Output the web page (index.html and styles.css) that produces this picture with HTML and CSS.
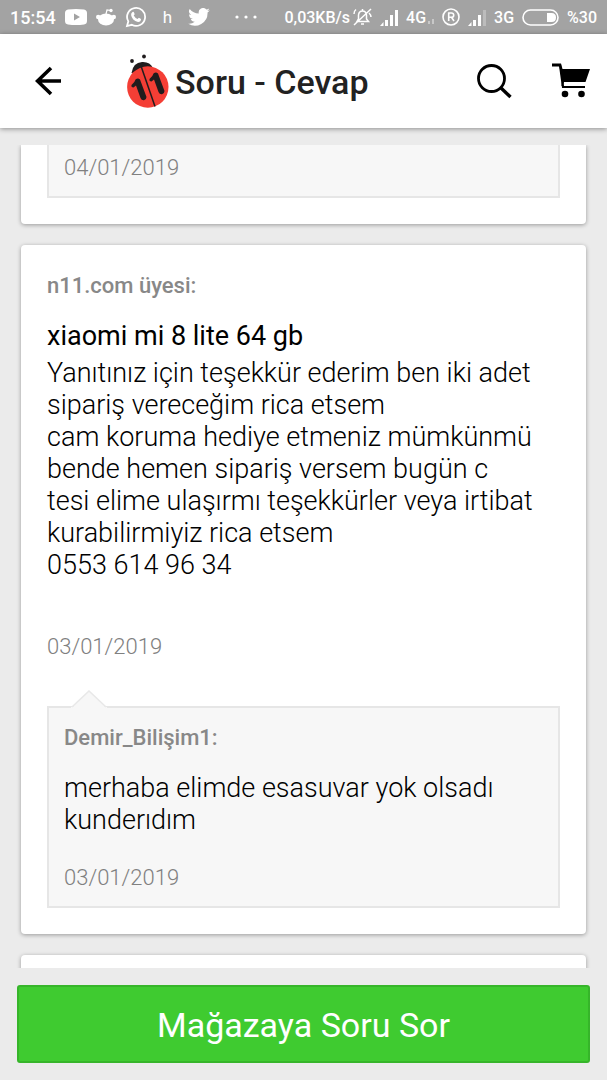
FILE: index.html
```html
<!DOCTYPE html>
<html lang="tr">
<head>
<meta charset="utf-8">
<meta name="viewport" content="width=device-width, initial-scale=1">
<title>Soru - Cevap</title>
<link rel="stylesheet" href="styles.css">
</head>
<body>
<div class="app">
  <div class="status">
    <div class="status-group">
      <span class="clock">15:54</span>
      <svg width="22" height="16" viewBox="0 0 22 16"><path fill="#fff" fill-rule="evenodd" d="M3 0.5Q11-.5 19 .5Q22 1 22 4V12Q22 15 19 15.500Q11 16.500 3 15.500Q0 15 0 12V4Q0 1 3 .5ZM9 4.500V11.500L15 8Z"/></svg>
      <svg width="20" height="18" viewBox="0 0 20 18"><g fill="#fff"><ellipse cx="10" cy="11.500" rx="8" ry="6"/><circle cx="2.200" cy="9" r="2.200"/><circle cx="17.800" cy="9" r="2.200"/><circle cx="15" cy="2.500" r="1.700"/></g><path d="M10 6L11 2L15 2.500" fill="none" stroke="#fff" stroke-width="1.200"/></svg>
      <svg width="22" height="22" viewBox="0 0 22 22"><path d="M2 20L3.300 15.400A9 9 0 1 1 6.800 18.800Z" fill="none" stroke="#fff" stroke-width="1.800"/><path fill="#fff" d="M7.500 6Q8.500 5.400 9 6.400L9.700 8.200L8.700 9.600Q10 12 12.500 13L13.900 11.700L16 12.900Q16 16 13 15.900Q7 14.500 6.100 9Q6 7 7.500 6Z"/></svg>
      <span class="note">h</span>
      <svg width="22" height="18" viewBox="0 0 24 20"><path fill="#fff" d="M24 2.400a10 10 0 0 1-2.800.8A5 5 0 0 0 23.300.5a10 10 0 0 1-3.100 1.200A4.900 4.900 0 0 0 11.800 6.200 14 14 0 0 1 1.700 1a4.900 4.900 0 0 0 1.500 6.600A5 5 0 0 1 1 7a4.900 4.900 0 0 0 4 4.900 5 5 0 0 1-2.300.1 4.900 4.900 0 0 0 4.600 3.400A10 10 0 0 1 0 17.400 14 14 0 0 0 21.500 5 10 10 0 0 0 24 2.400Z"/></svg>
      <svg class="more" width="22" height="4" viewBox="0 0 22 4"><g fill="#fff"><circle cx="2" cy="2" r="1.600"/><circle cx="11" cy="2" r="1.600"/><circle cx="20" cy="2" r="1.600"/></g></svg>
    </div>
    <div class="status-group status-right">
      <span class="speed">0,03KB/s<svg width="19" height="18" viewBox="0 0 19 18"><g fill="none" stroke="#fff" stroke-width="1.500"><path d="M4 13.500H15.500L13.500 11V7Q13 3 9.500 3Q6 3 5.500 7V11Z M8 16H11 M9.500 1V3 M1 17L18 1 M3 1.500Q1 3 1 6 M16 5Q18 7 18 9"/></g></svg></span>
      <svg width="18" height="17" viewBox="0 0 18 17"><path fill="#fff" d="M0 17L3.500 13V17Z M5 11H8V17H5Z M10 6H13V17H10Z M15 1H18V17H15Z"/></svg>
      <span class="network">4G<svg width="6" height="6" viewBox="0 0 6 6"><path fill="#c8c8c8" d="M0 3H2V6H0Z M4 1H6V6H4Z"/></svg></span>
      <svg width="18" height="18" viewBox="0 0 18 18"><g fill="none" stroke="#fff" stroke-width="1.600"><circle cx="9" cy="9" r="8"/><path d="M6.700 13V5H9.400Q11.700 5 11.700 7.200Q11.700 9.300 9.400 9.300H6.700 M9.500 9.300L12 13"/></g></svg>
      <svg width="18" height="17" viewBox="0 0 18 17"><path fill="#fff" d="M0 17L3.500 13V17Z M5 11H8V17H5Z M10 6H13V17H10Z"/><path fill="#bcbcbc" d="M15 1H18V17H15Z"/></svg>
      <span>3G</span>
      <svg width="37" height="17" viewBox="0 0 37 17"><rect x="1" y="1" width="35" height="15" rx="7.500" fill="none" stroke="#fff" stroke-width="1.600"/><path fill="#fff" d="M25 4H29.500Q34 4 34 8.500Q34 13 29.500 13H25Z"/></svg>
      <span>%30</span>
    </div>
  </div>

  <header class="header">
    <button class="icon-button" type="button" aria-label="Geri"><svg width="26" height="30" viewBox="0 0 26 30"><path d="M16 2L2.500 15L16 28M2.500 15H26" fill="none" stroke="#000" stroke-width="3.600"/></svg></button>
    <div class="brand">
      <svg width="42" height="54" viewBox="0 0 42 54">
        <g fill="#201c1d"><circle cx="5" cy="7" r="1.900"/><circle cx="17" cy="2.500" r="1.900"/><path d="M4.500 19Q6 8.500 15 8Q23 7.500 26 14L14 22Z"/></g>
        <circle cx="20.800" cy="33" r="20.700" fill="#f43e35"/>
        <path d="M14 12L28 52.500" stroke="#201c1d" stroke-width="1.500"/>
        <path d="M4.500 31Q8 28 8.500 25.500Q11 23.500 13 25.500L19.500 43Q19.500 45.500 17 46.200Q14.500 46.500 13.500 44L9 31.500L6.500 33.500Q4 33.500 4.500 31Z M22.500 25Q26 22 26.500 19.500Q29 17.500 31 19.500L37.500 37Q37.500 39.500 35 40.200Q32.500 40.500 31.500 38L27 25.500L24.500 27.500Q22 27.500 22.500 25Z" fill="#201c1d"/>
      </svg>
      <h1 class="title">Soru - Cevap</h1>
    </div>
    <button class="icon-button" type="button" aria-label="Ara"><svg width="36" height="36" viewBox="0 0 36 36"><g fill="none" stroke="#000"><circle cx="15.500" cy="15.500" r="13" stroke-width="2.800"/><path d="M25 25L34.500 34" stroke-width="3.400"/></g></svg></button>
    <button class="icon-button" type="button" aria-label="Sepet"><svg width="38" height="36" viewBox="0 0 38 36"><path d="M0 2H8L11 24H33" fill="none" stroke="#000" stroke-width="2.200"/><path d="M0 .5H9L10.500 6H38L33.500 19H12L11 23H9.500L10 18L7.500 3.500H0Z"/><circle cx="13" cy="31" r="3.300"/><circle cx="29.500" cy="31" r="3.300"/></svg></button>
  </header>

  <main class="list">
    <article class="card card-first">
      <div class="reply reply-first"><time class="date">04/01/2019</time></div>
    </article>
    <article class="card">
      <p class="author">n11.com üyesi:</p>
      <h2 class="product">xiaomi mi 8 lite 64 gb</h2>
      <p class="text">Yanıtınız için teşekkür ederim ben iki adet sipariş vereceğim rica etsem<br>cam koruma hediye etmeniz mümkünmü bende hemen sipariş versem bugün c<br>tesi elime ulaşırmı teşekkürler veya irtibat kurabilirmiyiz rica etsem<br>0553 614 96 34</p>
      <time class="date asked">03/01/2019</time>
      <section class="reply">
        <svg class="tail" width="36" height="18" viewBox="0 0 36 18"><path d="M0 18V17H2L18 1L34 17H36V18Z" fill="#f7f7f7"/><path d="M1 17L18 1L35 17" fill="none" stroke="#e8e8e8" stroke-width="1.500"/></svg>
        <p class="author">Demir_Bilişim1:</p>
        <p class="text">merhaba elimde esasuvar yok olsadı kunderıdım</p>
        <time class="date replied">03/01/2019</time>
      </section>
    </article>
    <article class="card"></article>
  </main>

  <footer class="footer"><button class="ask" type="button">Mağazaya Soru Sor</button></footer>
</div>
</body>
</html>
```
FILE: styles.css
```css
* { box-sizing: border-box; }
body, h1, h2, p { margin: 0; }
body { background: #ebebeb; color: #000; font-family: Roboto, "Noto Sans", sans-serif; }
button { font: inherit; border: 0; cursor: pointer; }
svg { display: block; flex: none; }

.app { display: flex; flex-direction: column; height: 100vh; overflow: hidden; }

.status {
  display: flex; align-items: center; justify-content: space-between;
  flex: none; height: 34px; padding: 0 10px;
  background: #a3a3a3; color: #fff; font-size: 17px; font-weight: 500; white-space: nowrap;
}
.status-group { display: flex; align-items: center; gap: 9px; }
.status-right { gap: 8px; font-size: 16px; }
.speed { display: flex; align-items: center; gap: 3px; }
.network { display: flex; align-items: flex-end; gap: 2px; }
.network svg { margin-bottom: 3px; }
.clock { font-size: 18px; }
.note { padding: 0 7px; font-weight: 400; }
.more { margin-left: 16px; }

.header {
  position: relative; display: flex; align-items: center; flex: none;
  height: 94px; padding: 0 17px 0 35px; gap: 40px;
  background: #fff; box-shadow: 0 1px 5px rgba(0, 0, 0, .4);
}
.icon-button { padding: 0; background: none; }
.brand { display: flex; align-items: center; gap: 6px; flex: 1; margin-left: 26px; }
.title { padding-top: 2px; font-size: 34px; line-height: 40px; font-weight: 500; color: #222; white-space: nowrap; }

.list {
  display: flex; flex-direction: column; gap: 21px;
  flex: 1; min-height: 0; margin-top: 17px; padding: 0 21px; overflow: hidden;
}
.card {
  flex: none; min-height: 64px; padding: 25px 26px 26px;
  background: #fff; border-radius: 4px; box-shadow: 0 1px 4px rgba(0, 0, 0, .35);
}
.card-first { padding-top: 0; border-radius: 0 0 4px 4px; }
.author { font-size: 22px; line-height: 32px; font-weight: 500; color: #888; }
.product { margin-top: 18px; font-size: 27px; line-height: 32px; font-weight: 400; }
.text { font-size: 27px; line-height: 32px; font-weight: 300; }
.product + .text { margin-top: 5px; }
.date { display: block; font-size: 22px; line-height: 32px; font-weight: 300; color: #808080; }
.asked { margin-top: 50px; }
.replied { margin-top: 26px; }

.reply {
  position: relative; margin-top: 43px; padding: 14px 15px 12px;
  background: #f7f7f7; border: 2px solid #e6e6e6;
}
.reply .text { margin-top: 18px; }
.reply-first { margin-top: 0; padding: 7px 15px 12px; border-top: 0; }
.tail { position: absolute; left: 22px; top: -18px; }

.footer { flex: none; padding: 17px; }
.ask {
  display: block; width: 100%; padding: 19px 16px 17px; border: 2px solid #36b52a; border-radius: 3px;
  background: #3fcb30; color: #fff; font-size: 34px; line-height: 38px; font-weight: 400;
}
```
